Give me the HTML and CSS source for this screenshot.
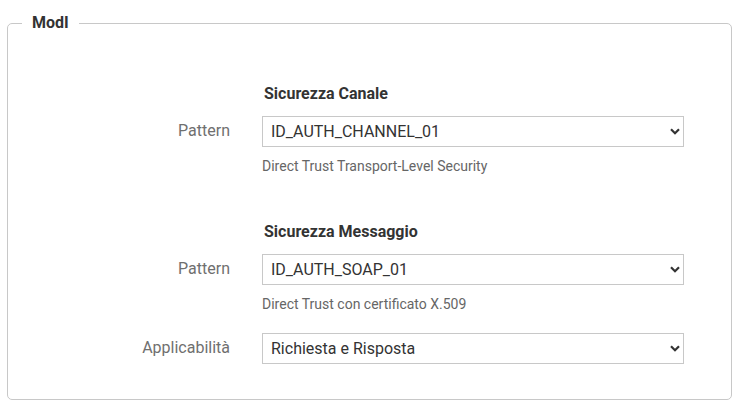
FILE: index.html
```html
<!DOCTYPE html>
<html lang="it">
<head>
<meta charset="utf-8">
<title>ModI</title>
<link rel="stylesheet" href="styles.css">
</head>
<body>
<fieldset class="box">
  <legend class="box-title">ModI</legend>

  <div class="section">
    <div class="row head-row">
      <div class="label"></div>
      <div class="field"><h3 class="section-title">Sicurezza Canale</h3></div>
    </div>
    <div class="row">
      <label class="label">Pattern</label>
      <div class="field">
        <div class="select-wrap">
          <select class="select"><option>ID_AUTH_CHANNEL_01</option></select>
          <svg class="chev" width="10" height="7" viewBox="0 0 10 7"><path d="M1 1.2 L5 5.2 L9 1.2" fill="none" stroke="#333" stroke-width="2.2"/></svg>
        </div>
        <p class="help">Direct Trust Transport-Level Security</p>
      </div>
    </div>
  </div>

  <div class="section second">
    <div class="row head-row">
      <div class="label"></div>
      <div class="field"><h3 class="section-title">Sicurezza Messaggio</h3></div>
    </div>
    <div class="row">
      <label class="label">Pattern</label>
      <div class="field">
        <div class="select-wrap">
          <select class="select"><option>ID_AUTH_SOAP_01</option></select>
          <svg class="chev" width="10" height="7" viewBox="0 0 10 7"><path d="M1 1.2 L5 5.2 L9 1.2" fill="none" stroke="#333" stroke-width="2.2"/></svg>
        </div>
        <p class="help">Direct Trust con certificato X.509</p>
      </div>
    </div>
    <div class="row last">
      <label class="label">Applicabilità</label>
      <div class="field">
        <div class="select-wrap">
          <select class="select"><option>Richiesta e Risposta</option></select>
          <svg class="chev" width="10" height="7" viewBox="0 0 10 7"><path d="M1 1.2 L5 5.2 L9 1.2" fill="none" stroke="#333" stroke-width="2.2"/></svg>
        </div>
      </div>
    </div>
  </div>
</fieldset>
</body>
</html>
```

FILE: styles.css
```css
html, body {
  margin: 0;
  padding: 0;
  background: #fff;
}
body {
  font-family: Roboto, "Liberation Sans", sans-serif;
  color: #333;
  padding: 15px 10px 0 7px;
}
.box {
  margin: 0;
  border: 1px solid #c8c8c8;
  border-radius: 5px;
  padding: 0 0 35px 0;
  min-width: 0;
}
.box-title {
  margin-left: 14px;
  padding: 0 10px;
  font-size: 16px;
  font-weight: 700;
  color: #333;
  line-height: 16px;
}
.section {
  padding-top: 53px;
}
.section.second {
  padding-top: 48px;
}
.row {
  display: grid;
  grid-template-columns: 222px 422px;
  column-gap: 32px;
  align-items: start;
}
.head-row {
  margin-bottom: 12px;
}
.section-title {
  margin: 0;
  padding-left: 2px;
  font-size: 16px;
  font-weight: 700;
  line-height: 20px;
  color: #333;
}
.label {
  text-align: right;
  font-size: 16px;
  color: #6f6f6f;
  line-height: 29px;
}
.select-wrap {
  position: relative;
  height: 31px;
}
.select {
  -webkit-appearance: none;
  appearance: none;
  width: 100%;
  height: 31px;
  box-sizing: border-box;
  border: 1px solid #c8c8c8;
  border-radius: 0;
  background: #fff;
  font-family: Roboto, "Liberation Sans", sans-serif;
  font-size: 16px;
  color: #333;
  padding: 0 28px 0 8px;
  margin: 0;
}
.chev {
  position: absolute;
  right: 4px;
  top: 12px;
  pointer-events: none;
}
.help {
  margin: 11px 0 0 0;
  font-size: 14px;
  line-height: 16px;
  color: #666;
}
.row.last {
  margin-top: 21px;
}
```
